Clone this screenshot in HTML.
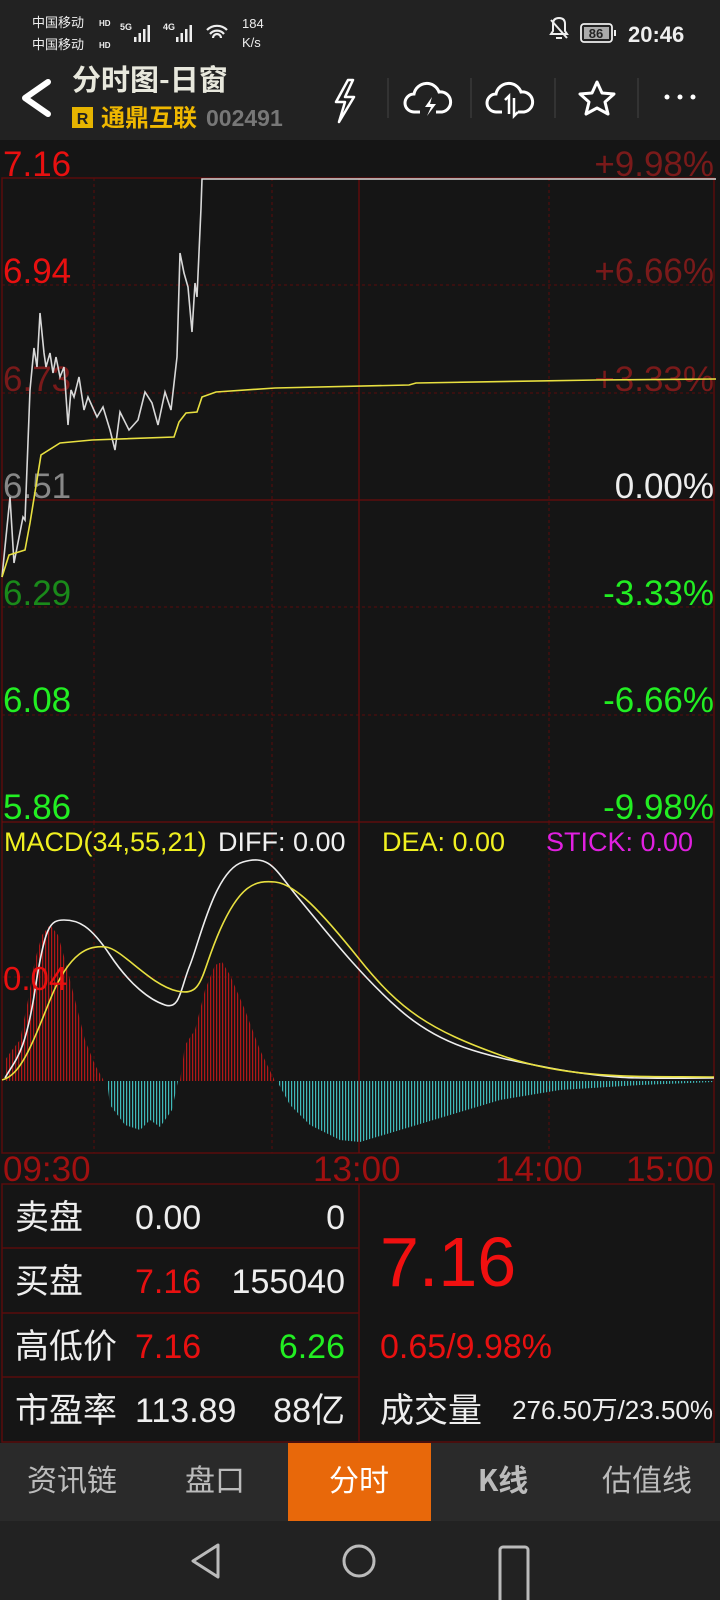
<!DOCTYPE html>
<html><head><meta charset="utf-8"><style>
html,body{margin:0;padding:0;background:#151515;width:720px;height:1600px;overflow:hidden}
svg{display:block}
text{font-family:"Liberation Sans","Noto Sans CJK SC",sans-serif}
.cn{font-family:"Noto Sans CJK SC","WenQuanYi Zen Hei",sans-serif}
</style></head><body>
<svg width="720" height="1600" viewBox="0 0 720 1600" xmlns="http://www.w3.org/2000/svg">
<defs>
<pattern id="pr" width="3" height="10" patternUnits="userSpaceOnUse"><rect width="1.2" height="10" fill="#b01818"/></pattern>
<pattern id="pc" width="3" height="10" patternUnits="userSpaceOnUse"><rect width="1.2" height="10" fill="#3fb8b8"/></pattern>
</defs>
<!-- header -->
<rect x="0" y="0" width="720" height="140" fill="#222"/>
<text class="cn" x="32" y="27" font-size="13" fill="#eee">中国移动</text>
<text class="cn" x="32" y="49" font-size="13" fill="#eee">中国移动</text>
<text x="99" y="26" font-size="8" fill="#eee" font-weight="bold">HD</text>
<text x="99" y="48" font-size="8" fill="#eee" font-weight="bold">HD</text>
<text x="120" y="30" font-size="9" fill="#eee" font-weight="bold">5G</text>
<g fill="#eee"><rect x="134" y="37" width="2.5" height="5"/><rect x="138.5" y="33" width="2.5" height="9"/><rect x="143" y="29" width="2.5" height="13"/><rect x="147.5" y="25" width="2.5" height="17"/>
<rect x="176" y="37" width="2.5" height="5"/><rect x="180.5" y="33" width="2.5" height="9"/><rect x="185" y="29" width="2.5" height="13"/><rect x="189.5" y="25" width="2.5" height="17"/></g>
<text x="163" y="30" font-size="9" fill="#eee" font-weight="bold">4G</text>
<path d="M207 30 a14 14 0 0 1 20 0 M210 34 a9 9 0 0 1 14 0 M213 38 a4 4 0 0 1 8 0" stroke="#eee" stroke-width="2.2" fill="none"/>
<text x="242" y="28" font-size="13" fill="#eee">184</text>
<text x="242" y="47" font-size="13" fill="#eee">K/s</text>
<path d="M553 24 q0-6 6-6 q6 0 6 6 v7 l2 3 h-16 l2-3z M556 38 h6" stroke="#eee" stroke-width="2" fill="none"/><path d="M551 20 l16 18" stroke="#eee" stroke-width="2"/>
<rect x="581" y="24" width="31" height="18" rx="3" fill="none" stroke="#eee" stroke-width="1.8"/><rect x="584" y="27" width="25" height="12" fill="#aaa"/>
<text x="596" y="38" font-size="13" font-weight="bold" fill="#222" text-anchor="middle">86</text><rect x="614" y="30" width="2" height="6" fill="#eee"/>
<text x="628" y="42" font-size="22" font-weight="bold" fill="#eee">20:46</text>
<path d="M48 82 L25 98 L48 114" stroke="#fff" stroke-width="6" fill="none" stroke-linecap="round" stroke-linejoin="round"/>
<text class="cn" x="72" y="90" font-size="29" font-weight="bold" fill="#e8e8dd">分时图-日窗</text>
<rect x="72" y="107" width="21" height="21" fill="#e6b400"/><text x="82.5" y="124" font-size="16" font-weight="bold" fill="#222" text-anchor="middle">R</text>
<text class="cn" x="101" y="126" font-size="24" font-weight="bold" fill="#f0b800">通鼎互联</text>
<text x="206" y="126" font-size="23" font-weight="bold" fill="#777">002491</text>
<path d="M348 80 l-12 22 h9 l-6 20 l15-25 h-9 l8-17z" stroke="#fff" stroke-width="2.5" fill="none" stroke-linejoin="round"/>
<g stroke="#444" stroke-width="1"><line x1="388" y1="78" x2="388" y2="118"/><line x1="471" y1="78" x2="471" y2="118"/><line x1="555" y1="78" x2="555" y2="118"/><line x1="638" y1="78" x2="638" y2="118"/></g>
<path d="M420 112 h-6 a9 9 0 0 1 0-18 a13 13 0 0 1 25 -2 a10 10 0 0 1 3 20 h-6" stroke="#fff" stroke-width="3" fill="none"/><path d="M432 97 l-7 10 h6 l-4 9 l9-12 h-6z" fill="#fff"/>
<path d="M502 112 h-6 a9 9 0 0 1 0-18 a13 13 0 0 1 25 -2 a10 10 0 0 1 3 20 h-6" stroke="#fff" stroke-width="3" fill="none"/><path d="M509 114 v-18 l-4 4 M514 98 v18 l4-4" stroke="#fff" stroke-width="2.5" fill="none"/>
<path d="M597 82 l5 11 l12 1 l-9 8 l3 12 l-11-6 l-11 6 l3-12 l-9-8 l12-1z" stroke="#fff" stroke-width="3" fill="none" stroke-linejoin="round"/>
<g fill="#fff"><circle cx="667" cy="97" r="2.5"/><circle cx="680" cy="97" r="2.5"/><circle cx="693" cy="97" r="2.5"/></g>

<!-- chart grid -->
<rect x="2" y="178" width="712" height="975" fill="none" stroke="#5a0c0c" stroke-width="1.5"/>
<g stroke="#5a0c0c" stroke-width="1" stroke-dasharray="3,3">
<line x1="2" y1="285" x2="714" y2="285"/><line x1="2" y1="393" x2="714" y2="393"/><line x1="2" y1="607" x2="714" y2="607"/><line x1="2" y1="715" x2="714" y2="715"/>
<line x1="94" y1="178" x2="94" y2="822"/><line x1="272" y1="178" x2="272" y2="822"/><line x1="549" y1="178" x2="549" y2="822"/>
<line x1="94" y1="822" x2="94" y2="1153"/><line x1="272" y1="822" x2="272" y2="1153"/><line x1="549" y1="822" x2="549" y2="1153"/><line x1="2" y1="977" x2="714" y2="977"/>
</g>
<g stroke="#6a0c0c" stroke-width="1.3"><line x1="2" y1="500" x2="714" y2="500"/><line x1="359" y1="178" x2="359" y2="822"/><line x1="2" y1="822" x2="714" y2="822"/><line x1="359" y1="822" x2="359" y2="1153"/></g>

<g font-size="35">
<text x="3" y="176" fill="#e81010">7.16</text>
<text x="3" y="283" fill="#e81010">6.94</text>
<text x="3" y="391" fill="#7a1a1a">6.73</text>
<text x="3" y="498" fill="#888">6.51</text>
<text x="3" y="605" fill="#1a8a1a">6.29</text>
<text x="3" y="712" fill="#22ee22">6.08</text>
<text x="3" y="819" fill="#22ee22">5.86</text>
<g text-anchor="end">
<text x="714" y="176" fill="#7a1a1a">+9.98%</text>
<text x="714" y="283" fill="#7a1a1a">+6.66%</text>
<text x="714" y="391" fill="#7a1a1a">+3.33%</text>
<text x="714" y="498" fill="#eee">0.00%</text>
<text x="714" y="605" fill="#22ee22">-3.33%</text>
<text x="714" y="712" fill="#22ee22">-6.66%</text>
<text x="714" y="819" fill="#22ee22">-9.98%</text>
</g></g>

<polyline fill="none" stroke="#d8d8d8" stroke-width="1.6" points="2,577 10,497 14,563 23,517 25,520 30,390 34,348 37,367 40,313 44,353 46,367 50,353 53,373 56,357 60,377 64,367 68,425 71,390 74,397 79,377 84,410 88,397 97,417 103,407 110,430 115,450 120,412 129,430 138,420 145,392 152,403 158,425 165,392 171,410 177,357 180,253 184,273 188,287 192,332 195,283 197,297 201,208 202,179 716,179"/>
<polyline fill="none" stroke="#e8e040" stroke-width="1.6" points="2,577 9,555 25,550 30,523 41,455 60,443 92,440 174,437 179,422 186,413 197,412 202,397 216,392 275,388 409,385 416,383 597,380 716,379"/>

<!-- MACD -->
<polygon fill="url(#pr)" points="5,1081 5,1060 12,1050 20,1040 28,1000 35,960 42,935 50,925 58,935 65,960 75,1000 85,1040 95,1065 104,1081"/>
<polygon fill="url(#pr)" points="180,1081 185,1045 195,1030 205,990 215,965 222,962 230,975 245,1010 260,1050 275,1081"/>
<polygon fill="url(#pc)" points="107,1081 110,1105 125,1125 140,1130 150,1120 160,1127 172,1110 178,1081"/>
<polygon fill="url(#pc)" points="277,1081 290,1105 310,1125 340,1140 360,1142 400,1130 450,1115 500,1100 560,1090 640,1085 714,1082 714,1081"/>
<path fill="none" stroke="#eee" stroke-width="1.6" d="M5,1078 C15,1060 25,1055 35,990 S50,920 64,920 S90,925 110,955 S150,1000 165,1005 S180,990 190,965 S215,870 243,862 S275,870 300,900 S360,975 400,1010 S480,1055 550,1068 S650,1078 714,1078"/>
<path fill="none" stroke="#e8e040" stroke-width="1.6" d="M2,1080 C20,1075 30,1050 50,1000 S90,945 106,947 S150,985 177,991 S200,975 220,930 S255,880 275,882 S320,910 360,960 S430,1030 500,1055 S640,1076 714,1077"/>
<g font-size="27">
<text x="4" y="851" fill="#f0f020">MACD(34,55,21)</text>
<text x="218" y="851" fill="#f0f0f0">DIFF: 0.00</text>
<text x="382" y="851" fill="#f0f020">DEA: 0.00</text>
<text x="546" y="851" fill="#e020e0">STICK: 0.00</text>
</g>
<text x="3" y="990" font-size="33" fill="#e81010">0.04</text>
<g font-size="35" fill="#a01010">
<text x="3" y="1181">09:30</text><text x="313" y="1181">13:00</text><text x="495" y="1181">14:00</text><text x="626" y="1181">15:00</text>
</g>

<!-- table -->
<rect x="2" y="1184" width="712" height="258" fill="none" stroke="#5a0c0c" stroke-width="1.5"/>
<g stroke="#5a0c0c" stroke-width="1.5"><line x1="359" y1="1184" x2="359" y2="1442"/><line x1="2" y1="1248" x2="359" y2="1248"/><line x1="2" y1="1313" x2="359" y2="1313"/><line x1="2" y1="1377" x2="359" y2="1377"/></g>
<g font-size="34">
<text class="cn" x="15" y="1229" fill="#eee">卖盘</text><text x="135" y="1229" fill="#eee">0.00</text><text x="345" y="1229" fill="#eee" text-anchor="end">0</text>
<text class="cn" x="15" y="1293" fill="#eee">买盘</text><text x="135" y="1293" fill="#e81010">7.16</text><text x="345" y="1293" fill="#eee" text-anchor="end">155040</text>
<text class="cn" x="15" y="1358" fill="#eee">高低价</text><text x="135" y="1358" fill="#e81010">7.16</text><text x="345" y="1358" fill="#22ee22" text-anchor="end">6.26</text>
<text class="cn" x="15" y="1422" fill="#eee">市盈率</text><text x="135" y="1422" fill="#eee">113.89</text><text x="345" y="1422" fill="#eee" text-anchor="end">88亿</text>
<text x="380" y="1286" font-size="70" fill="#f01010">7.16</text>
<text x="380" y="1358" fill="#e81010">0.65/9.98%</text>
<text class="cn" x="380" y="1422" fill="#eee">成交量</text>
<text x="713" y="1419" font-size="26" fill="#eee" text-anchor="end">276.50万/23.50%</text>
</g>

<!-- tabs -->
<rect x="0" y="1443" width="720" height="78" fill="#2a2a2a"/>
<rect x="288" y="1443" width="143" height="78" fill="#e8680a"/>
<g font-size="30" text-anchor="middle">
<text class="cn" x="72" y="1491" fill="#bbb">资讯链</text>
<text class="cn" x="215" y="1491" fill="#bbb">盘口</text>
<text class="cn" x="359" y="1491" fill="#fff">分时</text>
<text class="cn" x="503" y="1491" fill="#bbb" font-weight="bold">K线</text>
<text class="cn" x="647" y="1491" fill="#bbb">估值线</text>
</g>
<rect x="0" y="1521" width="720" height="79" fill="#222"/>
<path d="M218 1545 l-25 16 l25 16z" stroke="#bbb" stroke-width="3" fill="none" stroke-linejoin="round"/>
<circle cx="359" cy="1561" r="15" stroke="#bbb" stroke-width="3" fill="none"/>
<path d="M500 1600 v-50 a3 3 0 0 1 3-3 h22 a3 3 0 0 1 3 3 v50" stroke="#bbb" stroke-width="3" fill="none"/>
</svg>
</body></html>
